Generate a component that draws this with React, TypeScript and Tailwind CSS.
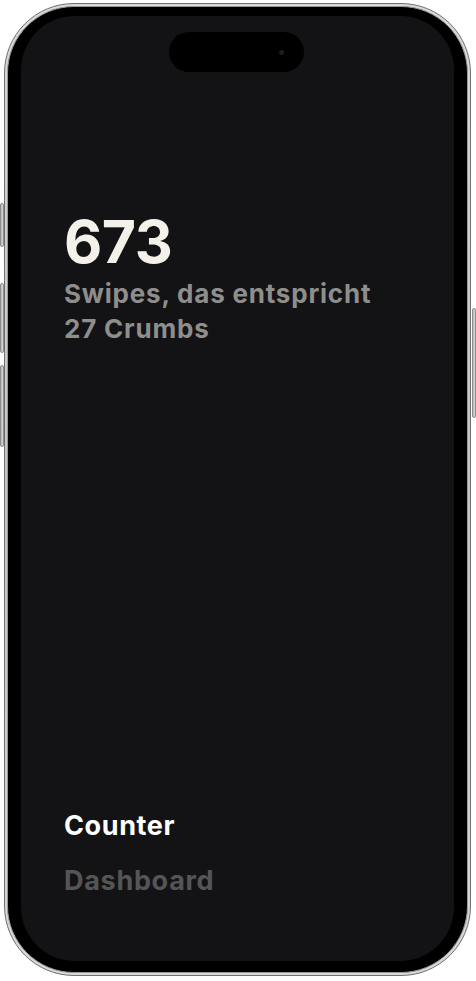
import React from "react";

// Swipe counter screen shown inside an iPhone frame
const SideButton = ({ className }: { className: string }) => (
  <div
    className={`absolute w-[4px] rounded-[2px] bg-gradient-to-r from-[#9a9a9a] via-[#e6e6e6] to-[#bdbdbd] border border-[#8c8c8c] ${className}`}
  />
);

const PhoneFrame = ({ children }: { children: React.ReactNode }) => (
  <div className="relative ml-[4px] mt-[3px] w-[467px] h-[973px]">
    {/* side buttons */}
    <SideButton className="-left-[4px] top-[200px] h-[44px]" />
    <SideButton className="-left-[4px] top-[280px] h-[70px]" />
    <SideButton className="-left-[4px] top-[362px] h-[82px]" />
    <SideButton className="-right-[5px] top-[305px] h-[110px]" />

    {/* silver rim */}
    <div className="h-full w-full rounded-[70px] border border-[#6f6f6f] bg-gradient-to-b from-[#d9d9d9] via-[#c4c4c4] to-[#d9d9d9] p-[2px]">
      <div className="h-full w-full rounded-[67px] border border-[#9a9a9a] bg-black px-[13px] pt-[9px] pb-[11px]">
        <div className="relative flex h-full w-full flex-col rounded-[54px] bg-[#131315]">
          {/* dynamic island */}
          <div className="absolute left-[148px] top-[16px] flex h-[40px] w-[135px] items-center justify-end rounded-full bg-black pr-[20px]">
            <div className="h-[5px] w-[5px] rounded-full bg-[#1c1c2a]" />
          </div>
          {children}
        </div>
      </div>
    </div>
  </div>
);

export default function App() {
  return (
    <div
      className="h-[981px] w-[476px] overflow-hidden bg-white"
      style={{ fontFamily: "Inter, 'Noto Sans', sans-serif" }}
    >
      <PhoneFrame>
        <div className="flex flex-1 flex-col px-[43px] pt-[196px] pb-[67px]">
          <div className="text-[59px] font-bold leading-none tracking-[-0.5px] text-[#f3f1ea]">
            673
          </div>
          <div className="mt-[5px] text-[26px] font-bold leading-[35px] tracking-[0.8px] text-[#8e8e8c]">
            Swipes, das entspricht
            <br />
            27 Crumbs
          </div>

          <div className="flex-1" />

          <nav className="flex flex-col gap-[28px]">
            <span className="text-[27px] font-bold leading-none tracking-[0.6px] text-white">
              Counter
            </span>
            <span className="text-[27px] font-bold leading-none tracking-[0.7px] text-[#555555]">
              Dashboard
            </span>
          </nav>
        </div>
      </PhoneFrame>
    </div>
  );
}
